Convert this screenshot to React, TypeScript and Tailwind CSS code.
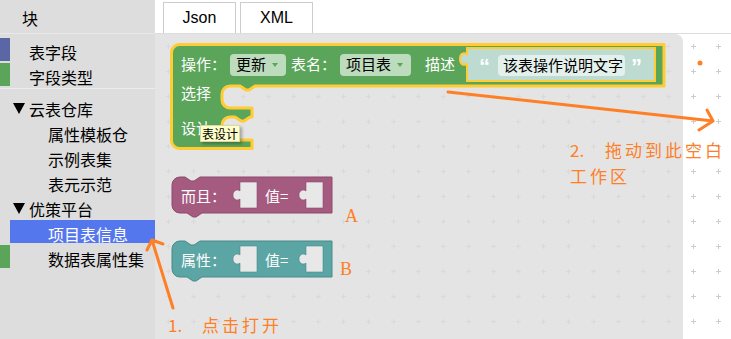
import React from 'react';

const ORANGE = '#ff7f27';

// cross-hair grid used by the blockly workspace
const Grid: React.FC<{ id: string; ox: number; oy: number; color: string }> = ({ id, ox, oy, color }) => (
  <svg className="absolute inset-0 h-full w-full" aria-hidden>
    <defs>
      <pattern id={id} x={ox - 12} y={oy - 12} width="25" height="25" patternUnits="userSpaceOnUse">
        <path d="M10 12.5h5M12.5 10v5" stroke={color} strokeWidth="1" />
      </pattern>
    </defs>
    <rect width="100%" height="100%" fill={`url(#${id})`} />
  </svg>
);

const holePath = (x: number, y: number) => {
  const l = x + 7;
  return `M${l} ${y} H${x + 24} V${y + 26} H${l} V${y + 17} C${l - 2} ${y + 19} ${x} ${y + 18} ${x} ${y + 13} C${x} ${y + 8} ${l - 2} ${y + 7} ${l} ${y + 9} Z`;
};

const valueBlockPath = (y: number) =>
  `M172 ${y + 8} A8 8 0 0 1 180 ${y} H185 l6 4 h3 l6 -4 H332 V${y + 36} H202 l-6 4 h-3 l-6 -4 H180 A8 8 0 0 1 172 ${y + 28} Z`;

const mainBlockPath =
  'M171.5 52.5 A8 8 0 0 1 179.5 44.5 H664 V86 H255 l-6 4 h-3 l-6 -4 H230 A8 8 0 0 0 222 94 V100 A8 8 0 0 0 230 108 H252 V117 H250 l-6 4 h-3 l-6 -4 H230 A8 8 0 0 0 222 125 V132 A8 8 0 0 0 230 140 H252 V148.5 H179.5 A8 8 0 0 1 171.5 140.5 Z';

const ValueBlock: React.FC<{ y: number; fill: string; edge: string; label: string }> = ({ y, fill, edge, label }) => (
  <g>
    <path d={valueBlockPath(y)} fill={fill} stroke={edge} strokeWidth="1" />
    <path d={holePath(233, y + 5)} fill="#e8e8e8" stroke={edge} strokeWidth="0.6" />
    <path d={holePath(299, y + 5)} fill="#e8e8e8" stroke={edge} strokeWidth="0.6" />
    <text x="181" y={y + 25} fill="#fff" fontSize="15">{label}</text>
    <text x="265" y={y + 25} fill="#fff" fontSize="15">值=</text>
  </g>
);

const Dropdown: React.FC<{ x: number; w: number; label: string }> = ({ x, w, label }) => (
  <g>
    <rect x={x} y="54" width={w} height="22" rx="4" fill="#bddbbd" />
    <text x={x + 6} y="70" fill="#000" fontSize="15">{label}</text>
    <path d={`M${x + w - 14} 63 h6 l-3 4 z`} fill="#5ba55b" />
  </g>
);

const Row: React.FC<{ children: React.ReactNode; strip?: string; pad: string; selected?: boolean }> = ({
  children,
  strip,
  pad,
  selected,
}) => (
  <div className="mb-[2px] flex h-[23px]">
    <div className={`h-full w-[10px] flex-none ${strip ?? ''}`} />
    <div className={`flex-1 whitespace-nowrap leading-[29px] ${pad} ${selected ? 'bg-[#5577ee] text-white' : ''}`}>
      {children}
    </div>
  </div>
);

const Caret = () => (
  <svg width="12" height="11" viewBox="0 0 12 11" className="mr-[4px] inline-block align-[2px]">
    <path d="M0 0h12L6 11z" fill="#000" />
  </svg>
);

export default function App() {
  return (
    <div className="relative flex h-[339px] w-[731px] overflow-hidden bg-white font-['Noto_Sans_CJK_SC',sans-serif] text-black">
      {/* toolbox */}
      <aside className="flex w-[155px] flex-none flex-col bg-[#dddddd] text-[16px]">
        <div className="h-[34px] border-b border-[#e8e8e8] pl-[22px] leading-[36px]">块</div>
        <div className="pt-[4px]">
          <Row strip="bg-[#5b67a5]" pad="pl-[19px]">表字段</Row>
          <Row strip="bg-[#5ba55b]" pad="pl-[19px]">字段类型</Row>
          <div className="mb-[6px] mt-px h-px bg-[#ececec]" />
          <Row pad="pl-[3px]">
            <Caret />
            云表仓库
          </Row>
          <Row pad="pl-[38px]">属性模板仓</Row>
          <Row pad="pl-[38px]">示例表集</Row>
          <Row pad="pl-[38px]">表元示范</Row>
          <Row pad="pl-[3px]">
            <Caret />
            优策平台
          </Row>
          <Row pad="pl-[38px]" selected>
            项目表信息
          </Row>
          <Row strip="bg-[#5ba55b]" pad="pl-[38px]">数据表属性集</Row>
        </div>
      </aside>

      <div className="flex flex-1 flex-col">
        {/* tabs */}
        <div className="flex h-[34px] flex-none items-end gap-[4px] border-b border-[#dddddd] pl-[8px] font-['Liberation_Sans',sans-serif] text-[16px]">
          <div className="flex h-[31px] w-[73px] items-center justify-center border border-b-0 border-[#cccccc] bg-white">
            Json
          </div>
          <div className="flex h-[31px] w-[73px] items-center justify-center border border-b-0 border-[#cccccc] bg-white">
            XML
          </div>
        </div>

        <div className="flex flex-1">
          {/* flyout */}
          <div className="relative w-[528px] flex-none rounded-tr-[8px] bg-[#e4e4e4]">
            <Grid id="gf" ox={13} oy={12} color="#d9d9d9" />
            <svg className="absolute left-0 top-0" width="528" height="305" viewBox="155 34 528 305">
              <path d={mainBlockPath} fill="#5ba55b" stroke="#ffcc33" strokeWidth="3" strokeLinejoin="round" />
              <text x="181" y="70" fill="#fff" fontSize="15">操作：</text>
              <Dropdown x={230} w={56} label="更新" />
              <text x="291" y="70" fill="#fff" fontSize="15">表名：</text>
              <Dropdown x={340} w={71} label="项目表" />
              <text x="425" y="70" fill="#fff" fontSize="15">描述</text>
              <path
                d="M467 48 H655 V81 H467 V64 C463 66 460 64 460 59 C460 54 463 52 467 54 Z"
                fill="#bddbd1"
                stroke="#ffcc33"
                strokeWidth="2"
              />
              <text x="479" y="74" fill="#fff" fontSize="22" fontWeight="bold" fontFamily="'Liberation Sans', sans-serif">
                “
              </text>
              <rect x="498" y="55" width="127" height="21" rx="4" fill="#e4f0ec" />
              <text x="503" y="71" fill="#000" fontSize="15">该表操作说明文字</text>
              <text x="631" y="74" fill="#fff" fontSize="22" fontWeight="bold" fontFamily="'Liberation Sans', sans-serif">
                ”
              </text>
              <text x="181" y="99" fill="#fff" fontSize="15">选择</text>
              <text x="181" y="134" fill="#fff" fontSize="15">设计</text>

              <ValueBlock y={177} fill="#a55b80" edge="#8c4a6b" label="而且：" />
              <ValueBlock y={241} fill="#5ba5a5" edge="#4a8a8a" label="属性：" />
            </svg>
            <div className="absolute left-[45px] top-[91px] border border-[#d8d8a8] bg-[#ffffc7] px-[1px] text-[12px] leading-[15px] shadow-[2px_2px_3px_rgba(0,0,0,0.3)]">
              表设计
            </div>
          </div>

          {/* workspace */}
          <div className="relative flex-1 bg-white">
            <Grid id="gw" ox={10} oy={12} color="#cccccc" />
          </div>
        </div>
      </div>

      {/* hand-drawn annotations */}
      <svg className="pointer-events-none absolute inset-0" width="731" height="339">
        <g stroke={ORANGE} strokeWidth="3" strokeLinecap="round" fill="none">
          <path d="M152 240 L173 308 M152 240 L147 250 M152 240 L163 244" />
          <path d="M448 92 L713 121 M713 121 L707 110 M713 121 L699 130" />
        </g>
        <circle cx="700" cy="63" r="2.5" fill={ORANGE} />
      </svg>
      <div className="pointer-events-none absolute left-[168px] top-[312px] flex whitespace-nowrap text-[17px] leading-[26px] text-[#ff7f27]">
        <span className="w-[34px]">1.</span>
        <span className="tracking-[3px]">点击打开</span>
      </div>
      <div className="pointer-events-none absolute left-[570px] top-[137px] whitespace-nowrap text-[17px] leading-[26px] text-[#ff7f27]">
        <div className="flex">
          <span className="w-[35px]">2.</span>
          <span className="tracking-[3px]">拖动到此空白</span>
        </div>
        <div className="tracking-[3px]">工作区</div>
      </div>
      <div className="pointer-events-none absolute left-[345px] top-[207px] font-['Liberation_Serif',serif] text-[18px] leading-[18px] text-[#ff7f27]">
        A
      </div>
      <div className="pointer-events-none absolute left-[340px] top-[260px] font-['Liberation_Serif',serif] text-[18px] leading-[18px] text-[#ff7f27]">
        B
      </div>
    </div>
  );
}
